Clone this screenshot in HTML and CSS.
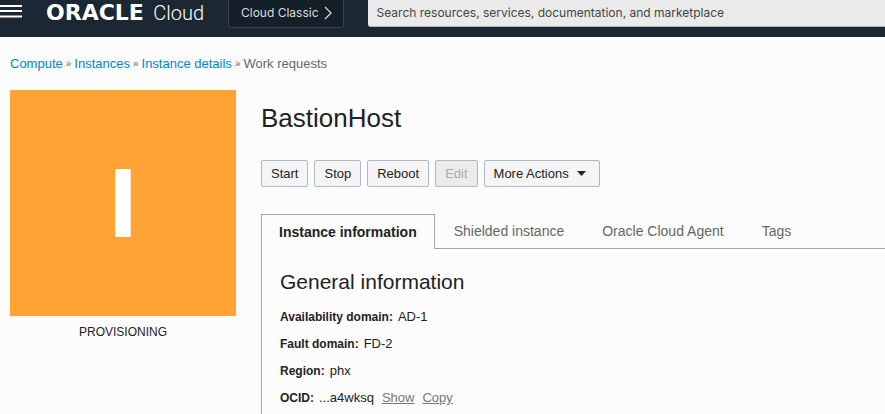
FILE: index.html
```html
<!DOCTYPE html>
<html lang="en">
<head>
<meta charset="utf-8">
<meta name="viewport" content="width=device-width, initial-scale=1">
<title>BastionHost - Oracle Cloud</title>
<link rel="stylesheet" href="styles.css">
</head>
<body>
<header class="topbar">
  <button class="menu" type="button" aria-label="Menu">
    <svg width="22" height="14" viewBox="0 0 22 14" aria-hidden="true"><path d="M0 2h22M0 7h22M0 12.5h22" stroke="#fff" stroke-width="1.8"/></svg>
  </button>
  <a class="brand" href="#"><span class="brand-name">ORACLE</span><span class="brand-product">Cloud</span></a>
  <button class="classic" type="button">Cloud Classic
    <svg width="8" height="14" viewBox="0 0 8 14" aria-hidden="true"><path d="M1 1l6 6-6 6" fill="none" stroke="currentColor" stroke-width="1.2"/></svg>
  </button>
  <input class="search" type="search" aria-label="Search" placeholder="Search resources, services, documentation, and marketplace">
</header>
<nav class="crumbs" aria-label="Breadcrumb">
  <a href="#">Compute</a><span class="sep">»</span><a href="#">Instances</a><span class="sep">»</span><a href="#">Instance details</a><span class="sep">»</span><span>Work requests</span>
</nav>
<main class="page">
  <aside class="status">
    <div class="tile"><svg width="16" height="68" viewBox="0 0 16 68" aria-hidden="true"><rect x=".3" width="15.4" height="68" fill="#fff"/></svg></div>
    <p class="state">PROVISIONING</p>
  </aside>
  <section class="details">
    <h1>BastionHost</h1>
    <div class="actions">
      <button type="button">Start</button>
      <button type="button">Stop</button>
      <button type="button">Reboot</button>
      <button type="button" disabled>Edit</button>
      <button class="more" type="button">More Actions
        <svg width="9" height="5" viewBox="0 0 9 5" aria-hidden="true"><path d="M0 0h9L4.5 5z" fill="#222"/></svg>
      </button>
    </div>
    <div class="tabs" role="tablist">
      <button class="tab active" type="button" role="tab" aria-selected="true">Instance information</button>
      <button class="tab" type="button" role="tab" aria-selected="false">Shielded instance</button>
      <button class="tab" type="button" role="tab" aria-selected="false">Oracle Cloud Agent</button>
      <button class="tab" type="button" role="tab" aria-selected="false">Tags</button>
    </div>
    <div class="panel" role="tabpanel">
      <h2>General information</h2>
      <dl>
        <div><dt>Availability domain:</dt> <dd>AD-1</dd></div>
        <div><dt>Fault domain:</dt> <dd>FD-2</dd></div>
        <div><dt>Region:</dt> <dd>phx</dd></div>
        <div><dt>OCID:</dt> <dd>...a4wksq <a href="#">Show</a> <a href="#">Copy</a></dd></div>
      </dl>
    </div>
  </section>
</main>
</body>
</html>
```
FILE: styles.css
```css
* { box-sizing: border-box; }
body {
  margin: 0;
  min-height: 100vh;
  display: flex;
  flex-direction: column;
  background: #fcfcfc;
  color: #222;
  font: 13px/18px "Liberation Sans", Arial, sans-serif;
}
button, input { font: inherit; color: inherit; }
h1, h2, p, dl, dd { margin: 0; }
h1, h2 { font-weight: 400; }

.topbar {
  display: flex;
  align-items: flex-start;
  height: 37px;
  background: #1b2733;
}
.menu {
  display: flex;
  padding: 4px 0 0;
  border: 0;
  background: none;
}
.brand {
  display: flex;
  align-items: baseline;
  justify-content: space-between;
  width: 158px;
  margin-left: 24px;
  color: #fff;
  text-decoration: none;
  line-height: 26px;
}
.brand-name { font-family: "DejaVu Sans", sans-serif; font-size: 22px; font-weight: 700; }
.brand-product { font-family: Roboto, sans-serif; font-size: 20px; font-weight: 300; }
.classic {
  display: flex;
  align-items: center;
  gap: 5px;
  height: 28px;
  margin-left: 24px;
  padding: 0 11px 2px 12px;
  border: 1px solid #37424d;
  border-top: 0;
  border-radius: 0 0 3px 3px;
  background: #151f28;
  color: #dcdcdc;
  font-family: Inter, sans-serif;
  font-size: 12px;
}
.search {
  flex: 1;
  min-width: 0;
  height: 27px;
  margin-left: 24px;
  padding: 0 9px 1px;
  border: 0;
  border-bottom: 1px solid #b4b8bb;
  border-radius: 0 0 0 3px;
  background: #eaeaea;
  font-family: Inter, sans-serif;
  font-size: 12px;
}
.search::placeholder { color: #444; opacity: 1; }

.crumbs { display: flex; gap: 3px; padding: 18px 10px 17px; color: #666; }
.crumbs a { color: #0084cb; text-decoration: none; }
.sep { font-size: 10px; }

.page { flex: 1; display: flex; gap: 25px; padding-left: 10px; }
.status { flex: none; width: 226px; text-align: center; }
.tile {
  display: grid;
  place-items: center;
  aspect-ratio: 1;
  background: #ffa334;
}
.state { margin-top: 7px; font-size: 12px; }
.details { flex: 1; min-width: 0; display: flex; flex-direction: column; }
h1 { margin-top: 12px; font-size: 26px; line-height: 32px; }
.actions { display: flex; gap: 6px; margin: 26px 0 27px; }
.actions button {
  height: 27px;
  padding: 0 9px;
  border: 1px solid #b0b8c2;
  border-radius: 2px;
  background: #f5f5f5;
}
.actions button:disabled { background: #ebebeb; color: #aaa; }
.actions .more { display: flex; align-items: center; gap: 8px; padding-right: 13px; }

.tabs { display: flex; }
.tab {
  height: 35px;
  padding: 0 19px;
  border: 0;
  border-bottom: 1px solid #a5a5a5;
  background: none;
  color: #666;
  font-size: 14px;
  white-space: nowrap;
}
.tabs::after { content: ""; flex: 1; border-bottom: 1px solid #a5a5a5; }
.tab.active {
  padding: 0 17px;
  border: 1px solid #a5a5a5;
  border-bottom: 0;
  color: #222;
  font-weight: 700;
}
.panel { flex: 1; padding: 18px 18px 0; border-left: 1px solid #a5a5a5; }
h2 { font-size: 21px; line-height: 30px; }
dl { display: grid; gap: 9px; margin-top: 11px; }
dl div { display: flex; align-items: baseline; gap: 5px; }
dt { font-size: 12px; font-weight: 700; }
dd { display: flex; gap: 8px; }
dd a { color: #777; }
```
